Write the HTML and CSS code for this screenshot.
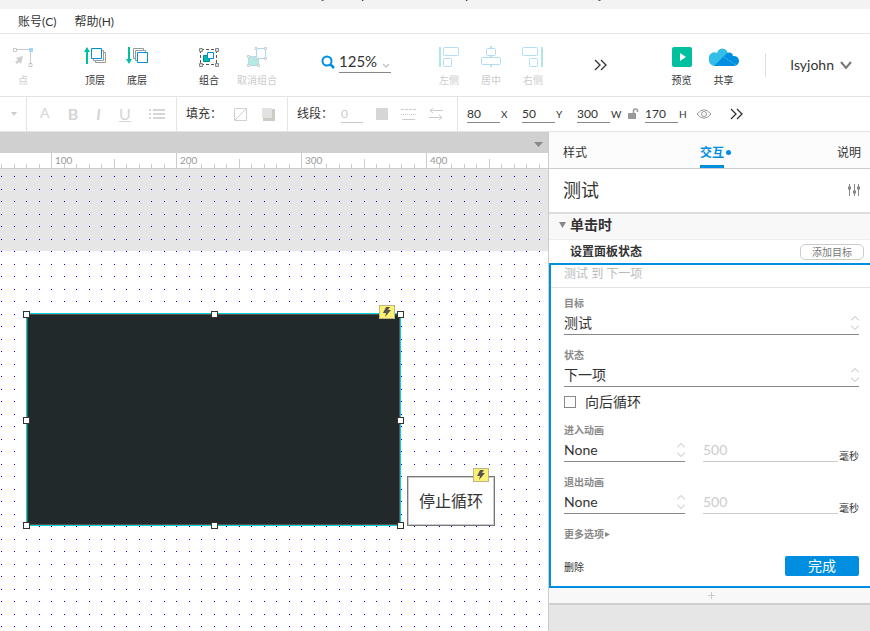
FILE: index.html
```
<!DOCTYPE html>
<html lang="zh-CN">
<head>
    <meta charset="UTF-8">
    <title>测试</title>
    <link rel="stylesheet" href="styles.css">
</head>
<body>

<div class="app">
    <!-- Window title, mostly above the visible area -->
    <div class="titlebar"><span>测试版</span><span>[ Axure panel state and samples with a dark base tile ]</span></div>

    <!-- Menu -->
    <nav class="menu">
        <a href="#">账号(C)</a>
        <a href="#">帮助(H)</a>
    </nav>

    <!-- Main toolbar -->
    <div class="toolbar">
        <button class="tool off point">
            <svg width="22" height="22" viewBox="0 0 22 22" fill="none"><path d="M3 3.500h14M18.500 5v12" stroke="#c8c8c8"/><path d="M1.500 2.500h3v3h-3zM17 17.500h3v3h-3z" stroke="#c8c8c8" fill="#fff"/><path d="M17 2h4v4h-4z" fill="#a5d8f5"/><path d="M11 10l-2 8-2-2-2 2-2-2 3-2-2-2z" fill="#cfcfcf"/></svg>
            <span>点</span>
        </button>
        <button class="tool top">
            <svg width="24" height="22" viewBox="0 0 24 22" fill="none"><path d="M4 5v13" stroke="#00c0a0" stroke-width="2"/><path d="M4 1l3 5H1z" fill="#00c0a0"/><path d="M20 6.500h2.500v10h-10V15M18 4.500h2.500v10h-10V13" stroke="#999"/><path d="M8.500 2.500h10v10h-10z" stroke="#008fe0" fill="#fff"/></svg>
            <span>顶层</span>
        </button>
        <button class="tool">
            <svg width="24" height="22" viewBox="0 0 24 22" fill="none"><path d="M4 1v13" stroke="#00c0a0" stroke-width="2"/><path d="M4 18l3-5H1z" fill="#00c0a0"/><path d="M10 12.500H8.500v-10h10V4M12 14.500h-1.500v-10h10V6" stroke="#999"/><path d="M12.500 6.500h10v10h-10z" stroke="#008fe0" fill="#fff"/></svg>
            <span>底层</span>
        </button>
        <button class="tool group">
            <svg width="22" height="22" viewBox="0 0 22 22" fill="none"><path d="M3 3.500h15M3 18.500h15M2.500 4v14M18.500 4v14" stroke="#555" stroke-dasharray="3 2"/><path d="M1.500 2.500h3v3h-3zM17.500 2.500h3v3h-3zM1.500 17.500h3v3h-3zM17.500 17.500h3v3h-3z" stroke="#888" fill="#ddd"/><path d="M5.500 9.500h6v6h-6z" fill="#00c0a0" stroke="#008f90"/><path d="M9.500 6.500h6v6h-6z" fill="#fff" stroke="#008fe0"/></svg>
            <span>组合</span>
        </button>
        <button class="tool off">
            <svg width="22" height="22" viewBox="0 0 22 22" fill="none"><path d="M2.500 10.500h10v9h-10z" fill="#b5eae0" stroke="#b2ddf5"/><path d="M10.500 2.500h9v10h-9z" fill="#fff" stroke="#a8d9f5"/><path d="M9 1.500h2v2H9zM18.500 1.500h2v2h-2zM18.500 11.500h2v2h-2zM9 11.500h2v2H9zM1.500 9.500h2v2h-2zM1.500 18.500h2v2h-2zM11.500 18.500h2v2h-2z" fill="#fff" stroke="#ccc"/></svg>
            <span>取消组合</span>
        </button>
        <label class="zoom">
            <svg width="14" height="14" viewBox="0 0 14 14" fill="none" stroke="#008fe0" stroke-width="2"><circle cx="6" cy="6" r="4.500"/><path d="M9 9l4 4" stroke-width="2.500"/></svg>
            <select><option>125%</option></select>
            <svg class="chev" width="8" height="6" viewBox="0 0 8 6" fill="none" stroke="#c8c8c8" stroke-width="1.500"><path d="M1 1l3 3 3-3"/></svg>
        </label>
        <button class="tool off">
            <svg width="22" height="22" viewBox="0 0 22 22" fill="none"><path d="M2 1v20" stroke="#aee8de" stroke-width="2"/><g stroke="#b2ddf5" fill="#fff"><rect x="5.500" y="1.500" width="15" height="8" rx="1"/><rect x="5.500" y="12.500" width="8" height="8" rx="1"/></g></svg>
            <span>左侧</span>
        </button>
        <button class="tool off">
            <svg width="22" height="22" viewBox="0 0 22 22" fill="none"><path d="M11 0v21" stroke="#aee8de" stroke-width="2"/><g stroke="#b2ddf5" fill="#fff"><rect x="6.500" y="2.500" width="9" height="7" rx="1"/><rect x="1.500" y="11.500" width="19" height="7" rx="1"/></g></svg>
            <span>居中</span>
        </button>
        <button class="tool off">
            <svg width="22" height="22" viewBox="0 0 22 22" fill="none"><path d="M20 1v20" stroke="#aee8de" stroke-width="2"/><g stroke="#b2ddf5" fill="#fff"><rect x="0.500" y="1.500" width="15" height="8" rx="1"/><rect x="7.500" y="12.500" width="8" height="8" rx="1"/></g></svg>
            <span>右侧</span>
        </button>
        <button class="more" aria-label="更多">
            <svg width="14" height="12" viewBox="0 0 14 12" fill="none" stroke="#333" stroke-width="1.300"><path d="M1 1l5 5-5 5M7 1l5 5-5 5"/></svg>
        </button>
        <button class="tool">
            <svg width="22" height="22" viewBox="0 0 22 22"><rect x="1" y="1" width="20" height="20" rx="2" fill="#00c0a0"/><path d="M9 7l6 4-6 4z" fill="#fff"/></svg>
            <span>预览</span>
        </button>
        <button class="tool">
            <svg width="30" height="22" viewBox="0 0 30 22"><path d="M6 20a6 6 0 0 1-6-7 5.500 5.500 0 0 1 8-6A5.500 5.500 0 0 1 18 5l1 3-12 12z" fill="#33bfe8"/><path d="M5 20L18 7a4 4 0 0 1 6 3 5 5 0 0 1 6 5 5 5 0 0 1-5 5z" fill="#008fe0"/><path d="M15 11l12 8" stroke="#6cc8f5" stroke-dasharray="1 1" fill="none"/></svg>
            <span>共享</span>
        </button>
        <button class="user">lsyjohn
            <svg width="12" height="9" viewBox="0 0 12 9" fill="none" stroke="#777" stroke-width="2"><path d="M1 1l5 6 5-6"/></svg>
        </button>
    </div>

    <!-- Format bar -->
    <div class="format">
        <div class="part drop"><svg width="6" height="4"><path d="M0 0h6L3 4z" fill="#ccc"/></svg></div>
        <div class="part text-tools">
            <button class="color">A</button>
            <button><b>B</b></button>
            <button><b><i>I</i></b></button>
            <button><u>U</u></button>
            <button aria-label="列表"><svg width="16" height="12" stroke="#d5d5d5" stroke-width="2"><path d="M0 2h2M0 6h2M0 10h2M4 2h12M4 6h12M4 10h12"/></svg></button>
        </div>
        <div class="part fill">
            <span>填充：</span>
            <svg width="13" height="13" fill="none" stroke="#d0d0d0"><path d="M.5.500h12v12H.5zM1 12L12 1"/></svg>
            <svg width="13" height="13"><path d="M3 1h10v12H1v-2z" fill="#ccccc4"/><path d="M0 0h10v10H0z" fill="#e2e2e2"/></svg>
        </div>
        <div class="part line">
            <label for="stroke">线段：</label>
            <input id="stroke" class="num off" value="0">
            <svg width="12" height="12"><path d="M0 0h12v12H0z" fill="#d6d6d6"/></svg>
            <svg width="15" height="12" fill="none" stroke="#ccc"><path d="M0 1.500h15" stroke-dasharray="3 1"/><path d="M0 6.500h15" stroke-dasharray="1 1"/><path d="M1 11.500h13"/></svg>
            <svg width="14" height="12" fill="none" stroke="#ccc"><path d="M14 2.500H1M4 0L1 2.500 4 5M0 9.500h13M10 7l3 2.500-3 2.500"/></svg>
        </div>
        <div class="part dims">
            <input id="x" class="num" value="80"><label for="x">X</label>
            <input id="y" class="num" value="50"><label for="y">Y</label>
            <input id="w" class="num" value="300"><label for="w">W</label>
            <svg class="lock" width="11" height="12" fill="none" stroke="#999"><path d="M0 5h8v6H0z" fill="#999" stroke="none"/><path d="M5.500 5V3q0-2 2-2t2 2v1" stroke-width="1.500"/></svg>
            <input id="h" class="num" value="170"><label for="h">H</label>
            <button class="eye" aria-label="隐藏"><svg width="16" height="10" fill="none" stroke="#999"><path d="M1 5q7-8.500 14 0-7 8.500-14 0z"/><circle cx="8" cy="5" r="2.500"/></svg></button>
            <button aria-label="更多"><svg width="14" height="12" viewBox="0 0 14 12" fill="none" stroke="#333" stroke-width="1.300"><path d="M1 1l5 5-5 5M7 1l5 5-5 5"/></svg></button>
        </div>
    </div>

    <div class="work">
        <main class="stage">
            <div class="pages"><svg width="9" height="5"><path d="M0 0h9L4.500 5z" fill="#888"/></svg></div>
            <div class="ruler">
                <svg class="ticks" width="100%" height="15">
                    <defs>
                        <pattern id="ticks" width="125" height="15" x="51" patternUnits="userSpaceOnUse">
                            <path d="M.5 0v15M63.500 6v9M13.500 11v4M25.500 11v4M38.500 11v4M50.500 11v4M75.500 11v4M88.500 11v4M100.500 11v4M113.500 11v4" stroke="#ccc"/>
                        </pattern>
                    </defs>
                    <rect width="100%" height="15" fill="url(#ticks)"/>
                </svg>
                <span>100</span><span>200</span><span>300</span><span>400</span>
            </div>
            <div class="canvas">
                <svg class="dots" width="100%" height="100%">
                    <defs>
                        <pattern id="dots" width="25" height="25" x="1" y="7" patternUnits="userSpaceOnUse">
                            <path d="M0 0h1v1H0zM13 0h1v1h-1zM0 13h1v1H0zM13 13h1v1h-1z" fill="#00f"/>
                        </pattern>
                    </defs>
                    <rect width="100%" height="100%" fill="url(#dots)"/>
                </svg>
                <div class="panel-widget">
                    <i class="h nw"></i><i class="h n"></i><i class="h ne"></i>
                    <i class="h w"></i><i class="h e"></i>
                    <i class="h sw"></i><i class="h s"></i><i class="h se"></i>
                    <span class="bolt"><svg width="8" height="10"><path d="M3 0h4L5 3h3L2 10l1-4H0z" fill="#555"/></svg></span>
                </div>
                <button class="button-widget">停止循环
                    <span class="bolt"><svg width="8" height="10"><path d="M3 0h4L5 3h3L2 10l1-4H0z" fill="#555"/></svg></span>
                </button>
            </div>
        </main>

        <!-- Inspector -->
        <aside class="inspector">
            <div class="tabs">
                <button>样式</button>
                <button class="active">交互</button>
                <button>说明</button>
            </div>
            <div class="name">
                <h2>测试</h2>
                <svg width="12" height="12" stroke="#888" fill="none"><path d="M1.500 0v12M6.500 0v12M10.500 0v12"/><path d="M0 4h3M5 8h3M9 4h3" stroke-width="3"/></svg>
            </div>
            <h3 class="event"><svg width="7" height="6"><path d="M0 0h7L3.500 6z" fill="#888"/></svg>单击时</h3>
            <div class="action">
                <h4>设置面板状态</h4>
                <button>添加目标</button>
            </div>
            <form class="card">
                <p class="summary">测试 到 下一项</p>
                <div class="fields">
                    <div class="field">
                        <label for="target">目标</label>
                        <div class="pick"><select id="target"><option>测试</option></select><svg width="8" height="14" fill="none" stroke="#bbb"><path d="M0 4.500l4-4 4 4M0 9.500l4 4 4-4"/></svg></div>
                    </div>
                    <div class="field">
                        <label for="state">状态</label>
                        <div class="pick"><select id="state"><option>下一项</option></select><svg width="8" height="14" fill="none" stroke="#bbb"><path d="M0 4.500l4-4 4 4M0 9.500l4 4 4-4"/></svg></div>
                    </div>
                    <label class="check"><input type="checkbox">向后循环</label>
                    <div class="field">
                        <label for="in">进入动画</label>
                        <div class="anim">
                            <div class="pick"><select id="in"><option>None</option></select><svg width="8" height="14" fill="none" stroke="#bbb"><path d="M0 4.500l4-4 4 4M0 9.500l4 4 4-4"/></svg></div>
                            <input id="in-ms" value="500"><label for="in-ms">毫秒</label>
                        </div>
                    </div>
                    <div class="field">
                        <label for="out">退出动画</label>
                        <div class="anim">
                            <div class="pick"><select id="out"><option>None</option></select><svg width="8" height="14" fill="none" stroke="#bbb"><path d="M0 4.500l4-4 4 4M0 9.500l4 4 4-4"/></svg></div>
                            <input id="out-ms" value="500"><label for="out-ms">毫秒</label>
                        </div>
                    </div>
                    <button type="button" class="options">更多选项<svg width="5" height="5"><path d="M0 0l5 2.500L0 5z" fill="#888"/></svg></button>
                    <div class="actions">
                        <button type="button" class="delete">删除</button>
                        <button type="button" class="done">完成</button>
                    </div>
                </div>
            </form>
            <button class="add" aria-label="添加"><svg width="7" height="7" stroke="#ccc"><path d="M3.500 0v7M0 3.500h7"/></svg></button>
        </aside>
    </div>
</div>

</body>
</html>
```
FILE: styles.css
```
* {
    box-sizing: border-box;
}
body {
    margin: 0;
    font-family: Lato, "Noto Sans CJK SC", sans-serif;
    font-size: 12px;
    line-height: 16px;
    color: #333;
    background: #fff;
}
button, input, select {
    font: inherit;
    color: inherit;
    margin: 0;
    padding: 0;
    border: none;
    border-radius: 0;
    background: none;
    outline: none;
    appearance: none;
}
button {
    cursor: pointer;
}
svg {
    display: block;
    flex-shrink: 0;
}
h2, h3, h4, p {
    margin: 0;
}
.app {
    display: flex;
    flex-direction: column;
    height: 100vh;
    overflow: hidden;
}
.titlebar {
    display: flex;
    justify-content: center;
    align-items: flex-end;
    gap: 16px;
    height: 9px;
    overflow: hidden;
    background: #f3f3f3;
    color: #111;
    padding-bottom: 6px;
    white-space: nowrap;
}
.menu {
    display: flex;
    align-items: center;
    gap: 18px;
    height: 25px;
    padding: 1px 0 0 18px;
    border-bottom: 1px solid #e4e4e4;
}
.menu a {
    color: #333;
    text-decoration: none;
}

/* Toolbar */
.toolbar {
    display: flex;
    align-items: center;
    height: 63px;
    border-bottom: 1px solid #e4e4e4;
}
.tool {
    display: flex;
    flex-direction: column;
    align-items: center;
    gap: 4px;
    width: 42px;
    padding-top: 4px;
    font-size: 10px;
    line-height: 16px;
    white-space: nowrap;
    flex-shrink: 0;
}
.tool.off {
    color: #ccc;
}
.point {
    margin-left: 2px;
}
.top {
    margin-left: 30px;
}
.group {
    margin: 0 6px 0 30px;
}
.zoom {
    display: flex;
    align-items: center;
    position: relative;
    gap: 4px;
    margin: 0 37px 0 43px;
    padding-bottom: 7px;
}
.zoom select {
    width: 52px;
    height: 22px;
    font-size: 15px;
    border-bottom: 1px solid #888;
}
.chev {
    position: absolute;
    right: 1px;
    bottom: 11px;
}
.more {
    margin: 0 auto 0 40px;
}
.user {
    display: flex;
    align-items: center;
    gap: 6px;
    height: 24px;
    margin: 0 18px 0 20px;
    padding-left: 25px;
    border-left: 1px solid #e0e0e0;
    font-size: 14px;
}

/* Format bar */
.format {
    display: flex;
    height: 35px;
    border-bottom: 1px solid #e4e4e4;
}
.part {
    display: flex;
    align-items: center;
    border-right: 1px solid #e4e4e4;
}
.drop {
    width: 27px;
    padding-left: 11px;
}
.text-tools {
    width: 150px;
    padding: 0 11px 0 13px;
    justify-content: space-between;
    color: #d5d5d5;
    font-size: 16px;
}
.text-tools .color {
    font-size: 14px;
    padding-bottom: 3px;
}
.fill {
    width: 111px;
    padding-left: 9px;
    gap: 12px;
}
.fill svg + svg {
    margin-left: 3px;
}
.line {
    width: 170px;
    padding-left: 9px;
    gap: 13px;
}
.line label {
    margin-right: -5px;
}
.num {
    width: 33px;
    height: 18px;
    border-bottom: 1px solid #888;
}
.num.off {
    width: 22px;
    color: #ccc;
    border-color: #ccc;
}
.dims {
    flex: 1;
    padding-left: 9px;
    border-right: none;
}
.dims label {
    width: 22px;
    padding-left: 1px;
    font-size: 10px;
}
.dims label[for="w"] {
    width: 18px;
}
.dims label[for="h"] {
    width: 18px;
}
.lock {
    margin-right: 6px;
}
.eye {
    margin-right: 18px;
}

.work {
    display: flex;
    flex: 1;
    min-height: 0;
}
.stage {
    display: flex;
    flex-direction: column;
    flex: 1;
    min-width: 0;
}
.pages {
    display: flex;
    justify-content: flex-end;
    align-items: center;
    height: 21px;
    padding: 3px 5px 0 0;
    background: #d0d0d0;
}
.ruler {
    display: flex;
    position: relative;
    height: 16px;
    padding-left: 55px;
    overflow: hidden;
    border-bottom: 1px solid #ccc;
    font-size: 10px;
    line-height: 14px;
    color: #999;
}
.ruler span {
    width: 125px;
    flex-shrink: 0;
}
.ticks {
    position: absolute;
    left: 0;
    top: 0;
}

/* Canvas widgets sit at free coordinates */
.canvas {
    position: relative;
    flex: 1;
    overflow: hidden;
    background: linear-gradient(#e6e6e6 82px, #fff 82px);
}
.dots {
    position: absolute;
}
.panel-widget {
    position: absolute;
    left: 26px;
    top: 144px;
    width: 375px;
    height: 213px;
    border: 1px solid #00d5d5;
    background: #22292b;
    box-shadow: inset 0 0 0 1px #555;
}
.button-widget {
    position: absolute;
    left: 407px;
    top: 307px;
    width: 88px;
    height: 50px;
    border: 1px solid #777;
    box-shadow: inset 0 0 0 1px #ccc;
    background: #fff;
    font-size: 16px;
}
.h {
    position: absolute;
    width: 7px;
    height: 7px;
    border: 1px solid #333;
    background: #fff;
}
.nw, .w, .sw {
    left: -4px;
}
.ne, .e, .se {
    right: -4px;
}
.n, .s {
    left: calc(50% - 3px);
}
.nw, .n, .ne {
    top: -3px;
}
.w, .e {
    top: calc(50% - 3px);
}
.sw, .s, .se {
    bottom: -4px;
}
.bolt {
    display: flex;
    align-items: center;
    justify-content: center;
    position: absolute;
    top: -9px;
    right: 5px;
    width: 16px;
    height: 14px;
    border: 1px solid #bbb78a;
    background: #fdf171;
}

/* Inspector */
.inspector {
    display: flex;
    flex-direction: column;
    width: 37%;
    border-left: 1px solid #ccc;
    background: #e6e6e6;
}
.tabs {
    display: flex;
    justify-content: space-between;
    height: 37px;
    padding: 6px 9px 0 14px;
    border-bottom: 1px solid #ccc;
    background: #fcfcfc;
}
.tabs .active {
    position: relative;
    color: #008fe0;
    font-weight: bold;
    border-bottom: 3px solid #008fe0;
    padding-top: 3px;
}
.tabs .active::after {
    content: "";
    position: absolute;
    left: 26px;
    top: 12px;
    width: 5px;
    height: 5px;
    border-radius: 50%;
    background: #008fe0;
}
.name {
    display: flex;
    align-items: center;
    justify-content: space-between;
    height: 45px;
    padding: 0 10px 2px 14px;
    border-bottom: 2px solid #ddd;
    background: #fff;
}
.name h2 {
    font-size: 18px;
    font-weight: normal;
}
.event {
    display: flex;
    align-items: center;
    gap: 4px;
    height: 26px;
    padding: 0 10px 4px;
    background: #f8f8f8;
    border-bottom: 1px solid #eee;
    font-size: 14px;
    font-weight: bold;
}
.action {
    display: flex;
    align-items: center;
    justify-content: space-between;
    height: 23px;
    padding: 0 6px 0 21px;
    background: #fff;
}
.action h4 {
    font-size: 12px;
}
.action button {
    width: 64px;
    height: 16px;
    border: 1px solid #ccc;
    border-radius: 5px;
    font-size: 10px;
    line-height: 14px;
    color: #777;
}
.card {
    border: 2px solid #008fe0;
    border-right: none;
    background: #fff;
}
.summary {
    height: 23px;
    padding: 1px 0 0 13px;
    border-bottom: 1px solid #e4e4e4;
    color: #bbb;
}
.fields {
    padding: 7px 11px 10px 13px;
}
.field {
    margin-bottom: 12px;
}
.field > label, .options {
    display: block;
    font-size: 10px;
    font-weight: bold;
    color: #888;
}
.pick {
    display: flex;
    align-items: center;
    height: 24px;
    border-bottom: 1px solid #888;
}
.pick select {
    flex: 1;
    min-width: 0;
    height: 22px;
    font-size: 14px;
}
.check {
    display: flex;
    align-items: center;
    gap: 9px;
    margin: -8px 0 9px;
    height: 22px;
    font-size: 14px;
}
.check input {
    width: 12px;
    height: 12px;
    border: 1px solid #888;
}
.anim {
    display: flex;
    align-items: flex-end;
}
.anim .pick {
    width: 41%;
    margin-right: 18px;
}
.anim input {
    flex: 1;
    min-width: 0;
    height: 24px;
    border-bottom: 1px solid #ccc;
    font-size: 14px;
    color: #ccc;
}
.anim label {
    font-size: 10px;
    line-height: 12px;
    padding-left: 1px;
}
.options {
    display: flex;
    align-items: center;
    gap: 1px;
}
.actions {
    display: flex;
    align-items: center;
    justify-content: space-between;
    margin-top: 14px;
}
.delete {
    font-size: 10px;
    padding-top: 2px;
}
.done {
    width: 74px;
    height: 20px;
    border-radius: 2px;
    background: #008fe0;
    color: #fff;
    font-size: 14px;
}
.add {
    display: flex;
    align-items: center;
    justify-content: center;
    height: 17px;
    padding-left: 4px;
    background: #f8f8f8;
    border-bottom: 2px solid #d0d0d0;
}
```
